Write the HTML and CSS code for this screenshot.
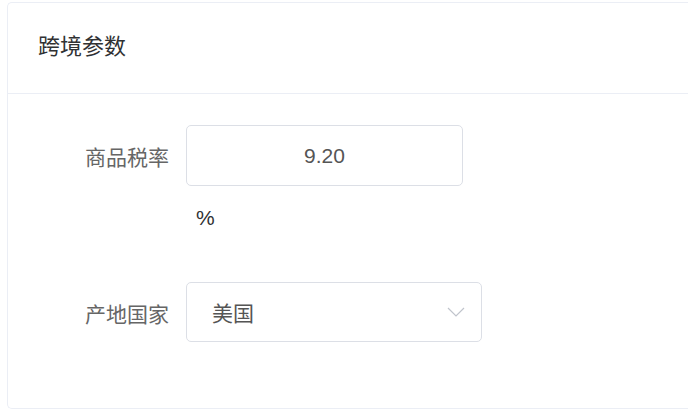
FILE: index.html
```html
<!DOCTYPE html>
<html lang="zh-CN">
  <head>
    <meta charset="UTF-8" />
    <meta name="viewport" content="width=device-width, initial-scale=1.0" />
    <title>跨境参数</title>
    <link rel="stylesheet" href="styles.css">
  </head>
  <body>
    <section class="card">
      <div class="card-header">跨境参数</div>
      <div class="card-body">
        <div class="form-item">
          <label class="form-label">商品税率</label>
          <div class="form-content">
            <input class="text-input" type="text" value="9.20" />
            <div class="unit">%</div>
          </div>
        </div>
        <div class="form-item">
          <label class="form-label">产地国家</label>
          <div class="form-content">
            <div class="select">
              <span class="select-value">美国</span>
              <svg class="select-arrow" width="18" height="10" viewBox="0 0 18 10">
                <path d="M1 1 L9 9 L17 1" fill="none" stroke="#c0c4cc" stroke-width="1.2" />
              </svg>
            </div>
          </div>
        </div>
      </div>
    </section>
  </body>
</html>
```

FILE: styles.css
```css
* {
  box-sizing: border-box;
  margin: 0;
  padding: 0;
}

html,
body {
  width: 100%;
  height: 100%;
  overflow: hidden;
}

body {
  font-family: "Liberation Sans", Arial, "Noto Sans CJK SC", sans-serif;
  background: #ffffff;
  color: #333333;
  padding: 2px 0 0 7px;
}

/* la tarjeta sigue fuera del recorte por la derecha */
.card {
  width: 100%;
  border: 1px solid #ebeef5;
  border-right: none;
  border-radius: 5px 0 0 5px;
  background: #ffffff;
}

.card-header {
  font-size: 22px;
  line-height: 30px;
  color: #303133;
  padding: 29px 30px 31px;
  border-bottom: 1px solid #ebeef5;
}

.card-body {
  padding: 31px 0 65px;
}

.form-item {
  display: flex;
  align-items: flex-start;
}

.form-item + .form-item {
  margin-top: 49px;
}

.form-label {
  width: 178px;
  height: 61px;
  padding-right: 17px;
  display: flex;
  align-items: center;
  justify-content: flex-end;
  font-size: 21px;
  color: #666666;
}

.form-content {
  display: flex;
  flex-direction: column;
}

.text-input {
  width: 277px;
  height: 61px;
  border: 1px solid #dcdfe6;
  border-radius: 5px;
  font-family: inherit;
  font-size: 21px;
  color: #555555;
  text-align: center;
  outline: none;
  background: #ffffff;
}

.unit {
  margin-top: 17px;
  padding-left: 10px;
  font-size: 21px;
  line-height: 30px;
  color: #303133;
}

.select {
  width: 296px;
  height: 60px;
  border: 1px solid #dcdfe6;
  border-radius: 5px;
  display: flex;
  align-items: center;
  justify-content: space-between;
  padding: 0 16px 0 25px;
}

.select-value {
  font-size: 21px;
  color: #555555;
}

.select-arrow {
  display: block;
}
```
